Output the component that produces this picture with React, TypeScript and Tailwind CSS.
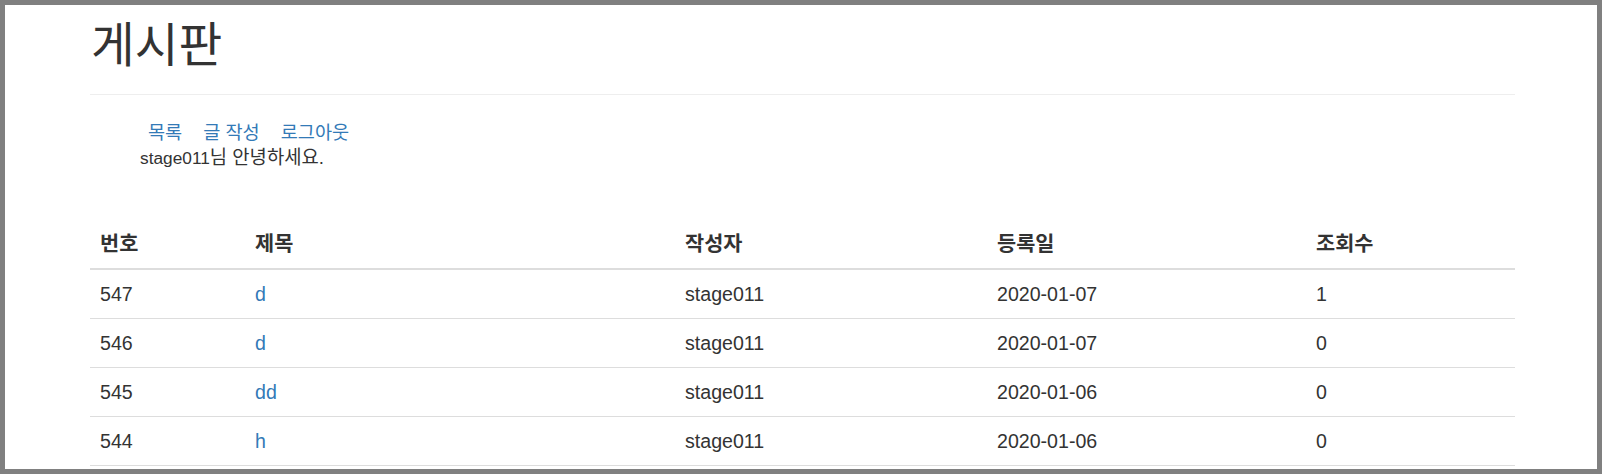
const posts = [
  { id: 547, title: "d", writer: "stage011", date: "2020-01-07", views: 1 },
  { id: 546, title: "d", writer: "stage011", date: "2020-01-07", views: 0 },
  { id: 545, title: "dd", writer: "stage011", date: "2020-01-06", views: 0 },
  { id: 544, title: "h", writer: "stage011", date: "2020-01-06", views: 0 },
];

const font = { fontFamily: '"Liberation Sans", "Noto Sans CJK KR", sans-serif' };

const th = "text-left font-bold text-[20.8px] px-[10px] py-[10px]";
const td = "px-[10px] py-[10px]";

export default function App() {
  return (
    <div
      className="h-[474px] w-full overflow-hidden border-[5px] border-[#808080] bg-white text-[#333]"
      style={font}
    >
      <div className="w-[1425px] ml-[85px]">
        {/* page header */}
        <div className="pt-[15px] pb-[22px] border-b border-[#eee]">
          <h1 className="text-[47.5px] leading-[52px] font-normal pl-[1px]">게시판</h1>
        </div>

        <div className="pl-[50px] pt-[25px]">
          <div className="flex gap-[21px] ml-[8px] text-[18.6px] leading-[25px] text-[#337ab7]">
            <a href="#">목록</a>
            <a href="#">글 작성</a>
            <a href="#">로그아웃</a>
          </div>
          <div className="text-[17.3px] leading-[25px]">
            stage011<span className="text-[18.8px]">님 안녕하세요.</span>
          </div>
        </div>

        <table className="mt-[49px] w-full table-fixed border-collapse text-[19.6px] leading-[28px]">
          <colgroup>
            <col className="w-[155px]" />
            <col className="w-[430px]" />
            <col className="w-[312px]" />
            <col className="w-[319px]" />
            <col className="w-[209px]" />
          </colgroup>
          <thead>
            <tr className="border-b-2 border-[#ddd]">
              <th className={th}>번호</th>
              <th className={th}>제목</th>
              <th className={th}>작성자</th>
              <th className={th}>등록일</th>
              <th className={th}>조회수</th>
            </tr>
          </thead>
          <tbody>
            {posts.map((p) => (
              <tr key={p.id} className="border-b border-[#ddd]">
                <td className={td}>{p.id}</td>
                <td className={td}>
                  <a href="#" className="text-[#337ab7]">{p.title}</a>
                </td>
                <td className={td}>{p.writer}</td>
                <td className={td}>{p.date}</td>
                <td className={td}>{p.views}</td>
              </tr>
            ))}
          </tbody>
        </table>
      </div>
    </div>
  );
}
